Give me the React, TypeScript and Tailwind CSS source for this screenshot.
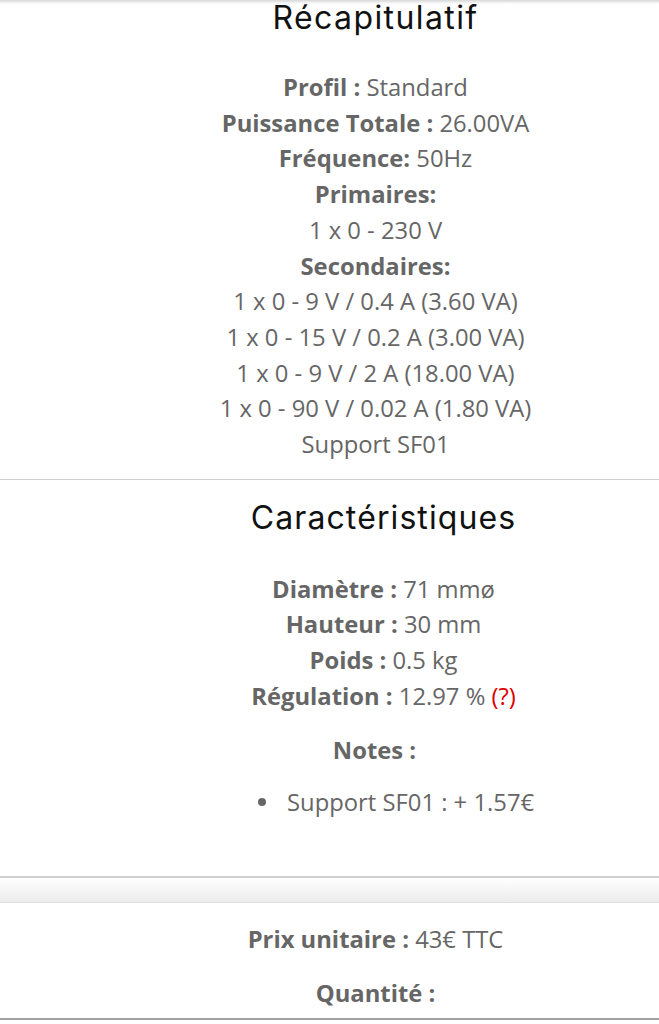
import React from "react";

const body = { fontFamily: '"Open Sans", "Noto Sans", sans-serif' } as const;
const head = { fontFamily: 'Inter, "Open Sans", sans-serif' } as const;

function Row({ label, value, extra }: { label?: string; value?: string; extra?: React.ReactNode }) {
  return (
    <div className="text-center whitespace-nowrap">
      {label && <span className="font-bold">{label}</span>}
      {value && <span>{value}</span>}
      {extra}
    </div>
  );
}

export default function App() {
  return (
    <div className="w-[659px] h-[1024px] bg-white overflow-hidden text-[#666]" style={body}>
      <div className="h-[4px] bg-gradient-to-b from-[#d8d8d8] to-white" />
      <div className="pl-[92px]">
        <h2 className="text-center text-[32px] leading-[28px] tracking-[1.4px] text-[#111] font-normal" style={head}>
          Récapitulatif
        </h2>
        <div className="mt-[38px] text-[23.8px] leading-[35.7px]">
          <Row label="Profil : " value="Standard" />
          <Row label="Puissance Totale : " value="26.00VA" />
          <Row label="Fréquence: " value="50Hz" />
          <Row label="Primaires:" />
          <Row value="1 x 0 - 230 V" />
          <Row label="Secondaires:" />
          <Row value="1 x 0 - 9 V / 0.4 A (3.60 VA)" />
          <Row value="1 x 0 - 15 V / 0.2 A (3.00 VA)" />
          <Row value="1 x 0 - 9 V / 2 A (18.00 VA)" />
          <Row value="1 x 0 - 90 V / 0.02 A (1.80 VA)" />
          <Row value="Support SF01" />
        </div>
      </div>
      <div className="mt-[16px] h-px bg-[#cfcfcf]" />
      <div className="pl-[108px]">
        <h2 className="mt-[21px] text-center text-[32px] leading-[34px] tracking-[1.1px] text-[#111] font-normal" style={head}>
          Caractéristiques
        </h2>
        <div className="mt-[37px] text-[23.8px] leading-[35.7px]">
          <Row label="Diamètre : " value="71 mmø" />
          <Row label="Hauteur : " value="30 mm" />
          <Row label="Poids : " value="0.5 kg" />
          <Row label="Régulation : " value="12.97 % " extra={<span className="text-[#e00000]">(?)</span>} />
        </div>
      </div>
      <div className="pl-[90px] text-[23.8px] leading-[36px]">
        <div className="mt-[17px] text-center font-bold">Notes :</div>
        <ul className="mt-[16px] pl-[168px]">
          <li className="flex items-center whitespace-nowrap">
            <span className="w-[8px] h-[8px] rounded-full bg-[#666] mr-[21px]" />
            <span>Support SF01 : + 1.57€</span>
          </li>
        </ul>
      </div>
      <div className="mt-[56px] h-[2px] bg-[#cfcfcf]" />
      <div className="h-[25px] bg-gradient-to-b from-white to-[#ececec] border-b border-[#e0e0e0]" />
      <div className="pl-[92px] text-[23.8px] leading-[30px]" style={body}>
        <div className="mt-[21px] text-center whitespace-nowrap">
          <span className="font-bold">Prix unitaire : </span>
          <span>43€ TTC</span>
        </div>
        <div className="mt-[24px] text-center font-bold">Quantité :</div>
      </div>
      <div className="mt-[10px] h-[2px] bg-[#a0a0a0]" />
    </div>
  );
}
